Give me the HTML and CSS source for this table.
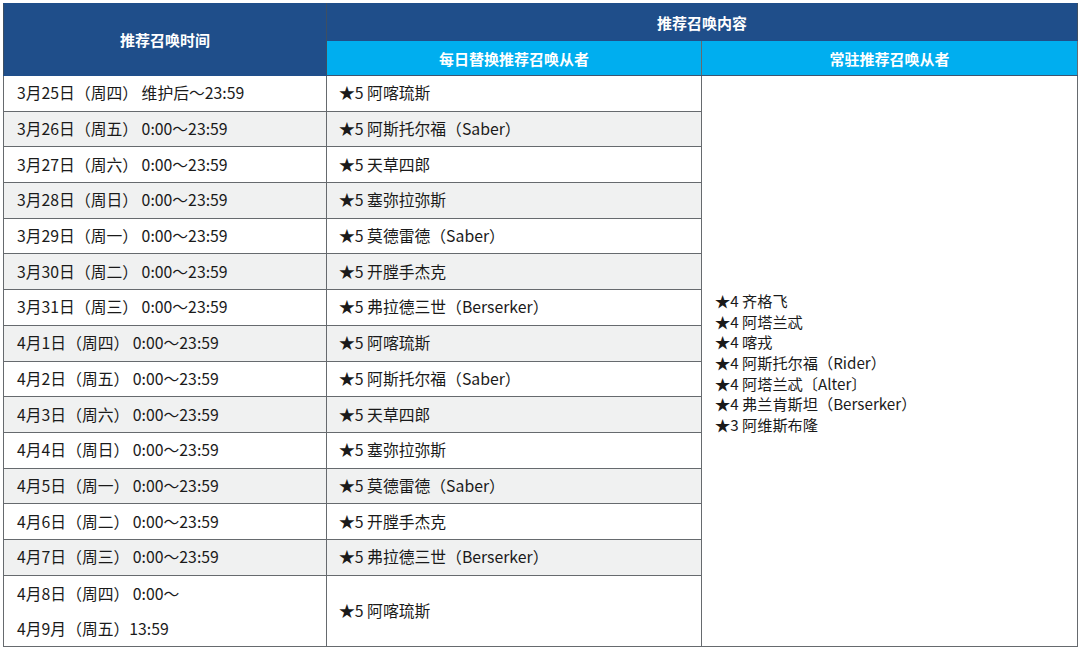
FILE: index.html
```html
<!DOCTYPE html>
<html lang="zh-CN">
<head>
<meta charset="utf-8">
<title>推荐召唤</title>
<link rel="stylesheet" href="styles.css">
</head>
<body>
<table class="summon">
  <colgroup>
    <col class="c-time">
    <col class="c-daily">
    <col class="c-fixed">
  </colgroup>
  <thead>
    <tr class="h1">
      <th rowspan="2" class="dark">推荐召唤时间</th>
      <th colspan="2" class="dark">推荐召唤内容</th>
    </tr>
    <tr class="h2">
      <th class="cyan">每日替换推荐召唤从者</th>
      <th class="cyan">常驻推荐召唤从者</th>
    </tr>
  </thead>
  <tbody>
    <tr>
      <td>3月25日（周四） 维护后～23:59</td>
      <td>★5 阿喀琉斯</td>
      <td rowspan="15" class="fixed">
        <div class="line">★4 齐格飞</div>
        <div class="line">★4 阿塔兰忒</div>
        <div class="line">★4 喀戎</div>
        <div class="line">★4 阿斯托尔福（Rider）</div>
        <div class="line">★4 阿塔兰忒〔Alter〕</div>
        <div class="line">★4 弗兰肯斯坦（Berserker）</div>
        <div class="line">★3 阿维斯布隆</div>
      </td>
    </tr>
    <tr class="alt"><td>3月26日（周五） 0:00～23:59</td><td>★5 阿斯托尔福（Saber）</td></tr>
    <tr><td>3月27日（周六） 0:00～23:59</td><td>★5 天草四郎</td></tr>
    <tr class="alt"><td>3月28日（周日） 0:00～23:59</td><td>★5 塞弥拉弥斯</td></tr>
    <tr><td>3月29日（周一） 0:00～23:59</td><td>★5 莫德雷德（Saber）</td></tr>
    <tr class="alt"><td>3月30日（周二） 0:00～23:59</td><td>★5 开膛手杰克</td></tr>
    <tr><td>3月31日（周三） 0:00～23:59</td><td>★5 弗拉德三世（Berserker）</td></tr>
    <tr class="alt"><td>4月1日（周四） 0:00～23:59</td><td>★5 阿喀琉斯</td></tr>
    <tr><td>4月2日（周五） 0:00～23:59</td><td>★5 阿斯托尔福（Saber）</td></tr>
    <tr class="alt"><td>4月3日（周六） 0:00～23:59</td><td>★5 天草四郎</td></tr>
    <tr><td>4月4日（周日） 0:00～23:59</td><td>★5 塞弥拉弥斯</td></tr>
    <tr class="alt"><td>4月5日（周一） 0:00～23:59</td><td>★5 莫德雷德（Saber）</td></tr>
    <tr><td>4月6日（周二） 0:00～23:59</td><td>★5 开膛手杰克</td></tr>
    <tr class="alt"><td>4月7日（周三） 0:00～23:59</td><td>★5 弗拉德三世（Berserker）</td></tr>
    <tr class="last">
      <td class="two"><div>4月8日（周四） 0:00～</div><div>4月9月（周五）13:59</div></td>
      <td>★5 阿喀琉斯</td>
    </tr>
  </tbody>
</table>
</body>
</html>
```

FILE: styles.css
```css
html, body {
  margin: 0;
  padding: 0;
  background: #ffffff;
}

body {
  padding: 3px 0 0 3px;
  font-family: "Noto Sans CJK SC", "Noto Sans", sans-serif;
  color: #1a1a1a;
}

.summon {
  border-collapse: collapse;
  table-layout: fixed;
  width: 1074px;
  font-size: 15.8px;
}

.c-time { width: 323px; }
.c-daily { width: 375px; }
.c-fixed { width: 376px; }

.summon th,
.summon td {
  border: 1px solid #666a6e;
  padding: 0;
}

.summon th {
  color: #ffffff;
  font-weight: 700;
  font-size: 15px;
  text-align: center;
  vertical-align: middle;
}

.h1 { height: 37px; }
.h2 { height: 35px; }

.dark { background: #1f4e8a; }
.cyan { background: #00aeef; }

.h1 th.dark { border-color: #1f4e8a #3d4f63 #1f4e8a #3d4f63; }
.h2 th.cyan { border-top-color: #1f4e8a; border-bottom-color: #3d5470; }

.summon tbody tr { height: 35.7px; }
.summon tbody tr.last { height: 67px; }

.summon td {
  padding-left: 13px;
  vertical-align: middle;
  white-space: nowrap;
  line-height: 20px;
}

.summon tr td + td { padding-left: 12px; }

.summon tr.alt td { background: #f0f1f1; }
.summon tr.alt td.fixed { background: #ffffff; }

.summon td.fixed {
  background: #ffffff;
  padding-left: 13px;
  padding-top: 3px;
  font-size: 15.2px;
}

.summon td.fixed .line {
  height: 20.6px;
  line-height: 20.6px;
}

.summon td.two {
  line-height: 35px;
}
```
